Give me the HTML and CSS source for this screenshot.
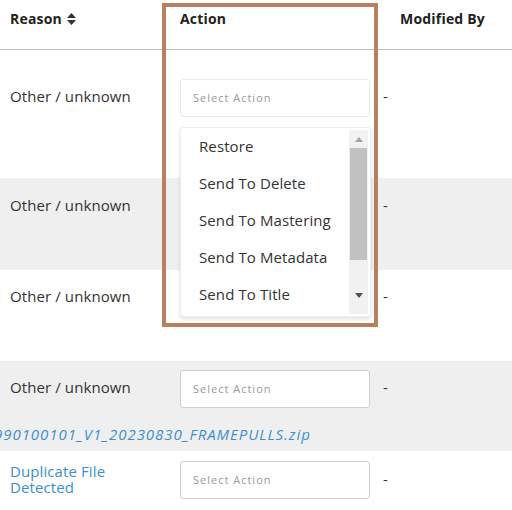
FILE: index.html
```html
<!DOCTYPE html>
<html lang="en">
<head>
    <meta charset="UTF-8">
    <title>Files</title>
    <link rel="stylesheet" href="styles.css">
</head>
<body>
    <div class="grid-wrap">
        <div class="row head">
            <div class="cell reason">Reason
                <svg class="sort" width="9" height="12" viewBox="0 0 9 12"><path d="M4.5 0 L9 5 H0 Z M0 7 H9 L4.5 12 Z" fill="#333"/></svg>
            </div>
            <div class="cell action">Action</div>
            <div class="cell modified">Modified By</div>
        </div>

        <div class="row r1">
            <div class="cell reason">Other / unknown</div>
            <div class="cell action">
                <div class="select focused">Select Action</div>
                <ul class="dropdown">
                    <li>Restore</li>
                    <li>Send To Delete</li>
                    <li>Send To Mastering</li>
                    <li>Send To Metadata</li>
                    <li>Send To Title</li>
                    <div class="scrollbar">
                        <span class="arrow up"></span>
                        <span class="thumb"></span>
                        <span class="arrow down"></span>
                    </div>
                </ul>
            </div>
            <div class="cell modified">-</div>
        </div>

        <!-- selects in rows 2 and 3 sit under the open list -->
        <div class="row r2 alt">
            <div class="cell reason">Other / unknown</div>
            <div class="cell action"><div class="select"></div></div>
            <div class="cell modified">-</div>
        </div>

        <div class="row r3">
            <div class="cell reason">Other / unknown</div>
            <div class="cell action"><div class="select"></div></div>
            <div class="cell modified">-</div>
        </div>

        <div class="row r4 alt">
            <div class="cell reason">Other / unknown</div>
            <div class="cell action"><div class="select">Select Action</div></div>
            <div class="cell modified">-</div>
            <div class="filename">990100101_V1_20230830_FRAMEPULLS.zip</div>
        </div>

        <div class="row r5">
            <div class="cell reason link">Duplicate File<br>Detected</div>
            <div class="cell action"><div class="select">Select Action</div></div>
            <div class="cell modified">-</div>
        </div>

        <div class="highlight"></div>
    </div>
</body>
</html>
```

FILE: styles.css
```css
body {
    margin: 0;
    font-family: "Open Sans", Arial, sans-serif;
    font-size: 15px;
    letter-spacing: 0.1px;
    color: #333;
    background-color: #fff;
    overflow: hidden;
}

.grid-wrap {
    position: relative;
}

.row {
    display: grid;
    grid-template-columns: 163px 216px 1fr;
    align-items: start;
}

.row.alt {
    background-color: #efefef;
}

.cell.reason {
    padding-left: 10px;
}

.cell.action {
    padding-left: 17px;
    position: relative;
}

.cell.modified {
    padding-left: 4px;
}

/* header */
.head {
    height: 49px;
    border-bottom: 1px solid #bdbdbd;
    font-weight: bold;
    font-size: 14px;
    letter-spacing: 0.2px;
    color: #222;
}

.head .cell {
    padding-top: 9px;
}

.head .cell.modified {
    padding-left: 21px;
}

.sort {
    vertical-align: -1px;
    margin-left: 1px;
}

.select {
    width: 176px;
    height: 36px;
    line-height: 35px;
    border: 1px solid #cfcfcf;
    border-radius: 3px;
    background-color: #fff;
    padding-left: 12px;
    font-size: 11px;
    letter-spacing: 1px;
    color: #999;
}

.select.focused {
    border-color: #eaeaea;
}

/* rows */
.r1 { height: 128px; }
.r1 .cell { padding-top: 29px; }
.r1 .cell.reason, .r1 .cell.modified { line-height: 35px; }

.r2 { height: 92px; }
.r2 .cell { padding-top: 9px; }
.r2 .cell.reason, .r2 .cell.modified { line-height: 36px; }

.r3 { height: 91px; }
.r3 .cell { padding-top: 9px; }
.r3 .cell.reason, .r3 .cell.modified { line-height: 35px; }

.r4 { height: 90px; }
.r4 .cell { padding-top: 9px; }
.r4 .cell.reason, .r4 .cell.modified { line-height: 35px; }

.filename {
    grid-column: 1 / 4;
    margin-left: -6px;
    margin-top: 9px;
    font-style: italic;
    letter-spacing: 0.95px;
    color: #3b8fd1;
}

.r5 { height: 60px; }
.r5 .cell { padding-top: 10px; }
.r5 .cell.modified { line-height: 37px; }

.link {
    color: #3b8fd1;
    line-height: 16px;
    padding-top: 12px !important;
}

/* open dropdown */
.dropdown {
    position: absolute;
    left: 17px;
    top: 77px;
    width: 189px;
    height: 188px;
    margin: 0;
    padding: 0;
    list-style: none;
    background-color: #fff;
    border: 1px solid #eee;
    border-radius: 3px;
    box-shadow: 0 2px 4px rgba(0, 0, 0, 0.12);
    overflow: hidden;
    z-index: 2;
}

.dropdown li {
    height: 37px;
    line-height: 36px;
    padding-left: 18px;
    color: #333;
}

.scrollbar {
    position: absolute;
    right: 2px;
    top: 2px;
    bottom: 2px;
    width: 19px;
    background-color: #f1f1f1;
    display: flex;
    flex-direction: column;
    align-items: center;
}

.scrollbar .thumb {
    width: 17px;
    height: 112px;
    background-color: #c1c1c1;
    margin-top: 6px;
}

.scrollbar .arrow {
    width: 0;
    height: 0;
    border-left: 4px solid transparent;
    border-right: 4px solid transparent;
}

.scrollbar .arrow.up {
    border-bottom: 5px solid #a3a3a3;
    margin-top: 7px;
}

.scrollbar .arrow.down {
    border-top: 5px solid #505050;
    margin-top: auto;
    margin-bottom: 16px;
}

.highlight {
    position: absolute;
    left: 162px;
    top: 3px;
    width: 208px;
    height: 316px;
    border: 4.5px solid #b8805f;
    pointer-events: none;
    z-index: 3;
}
```
